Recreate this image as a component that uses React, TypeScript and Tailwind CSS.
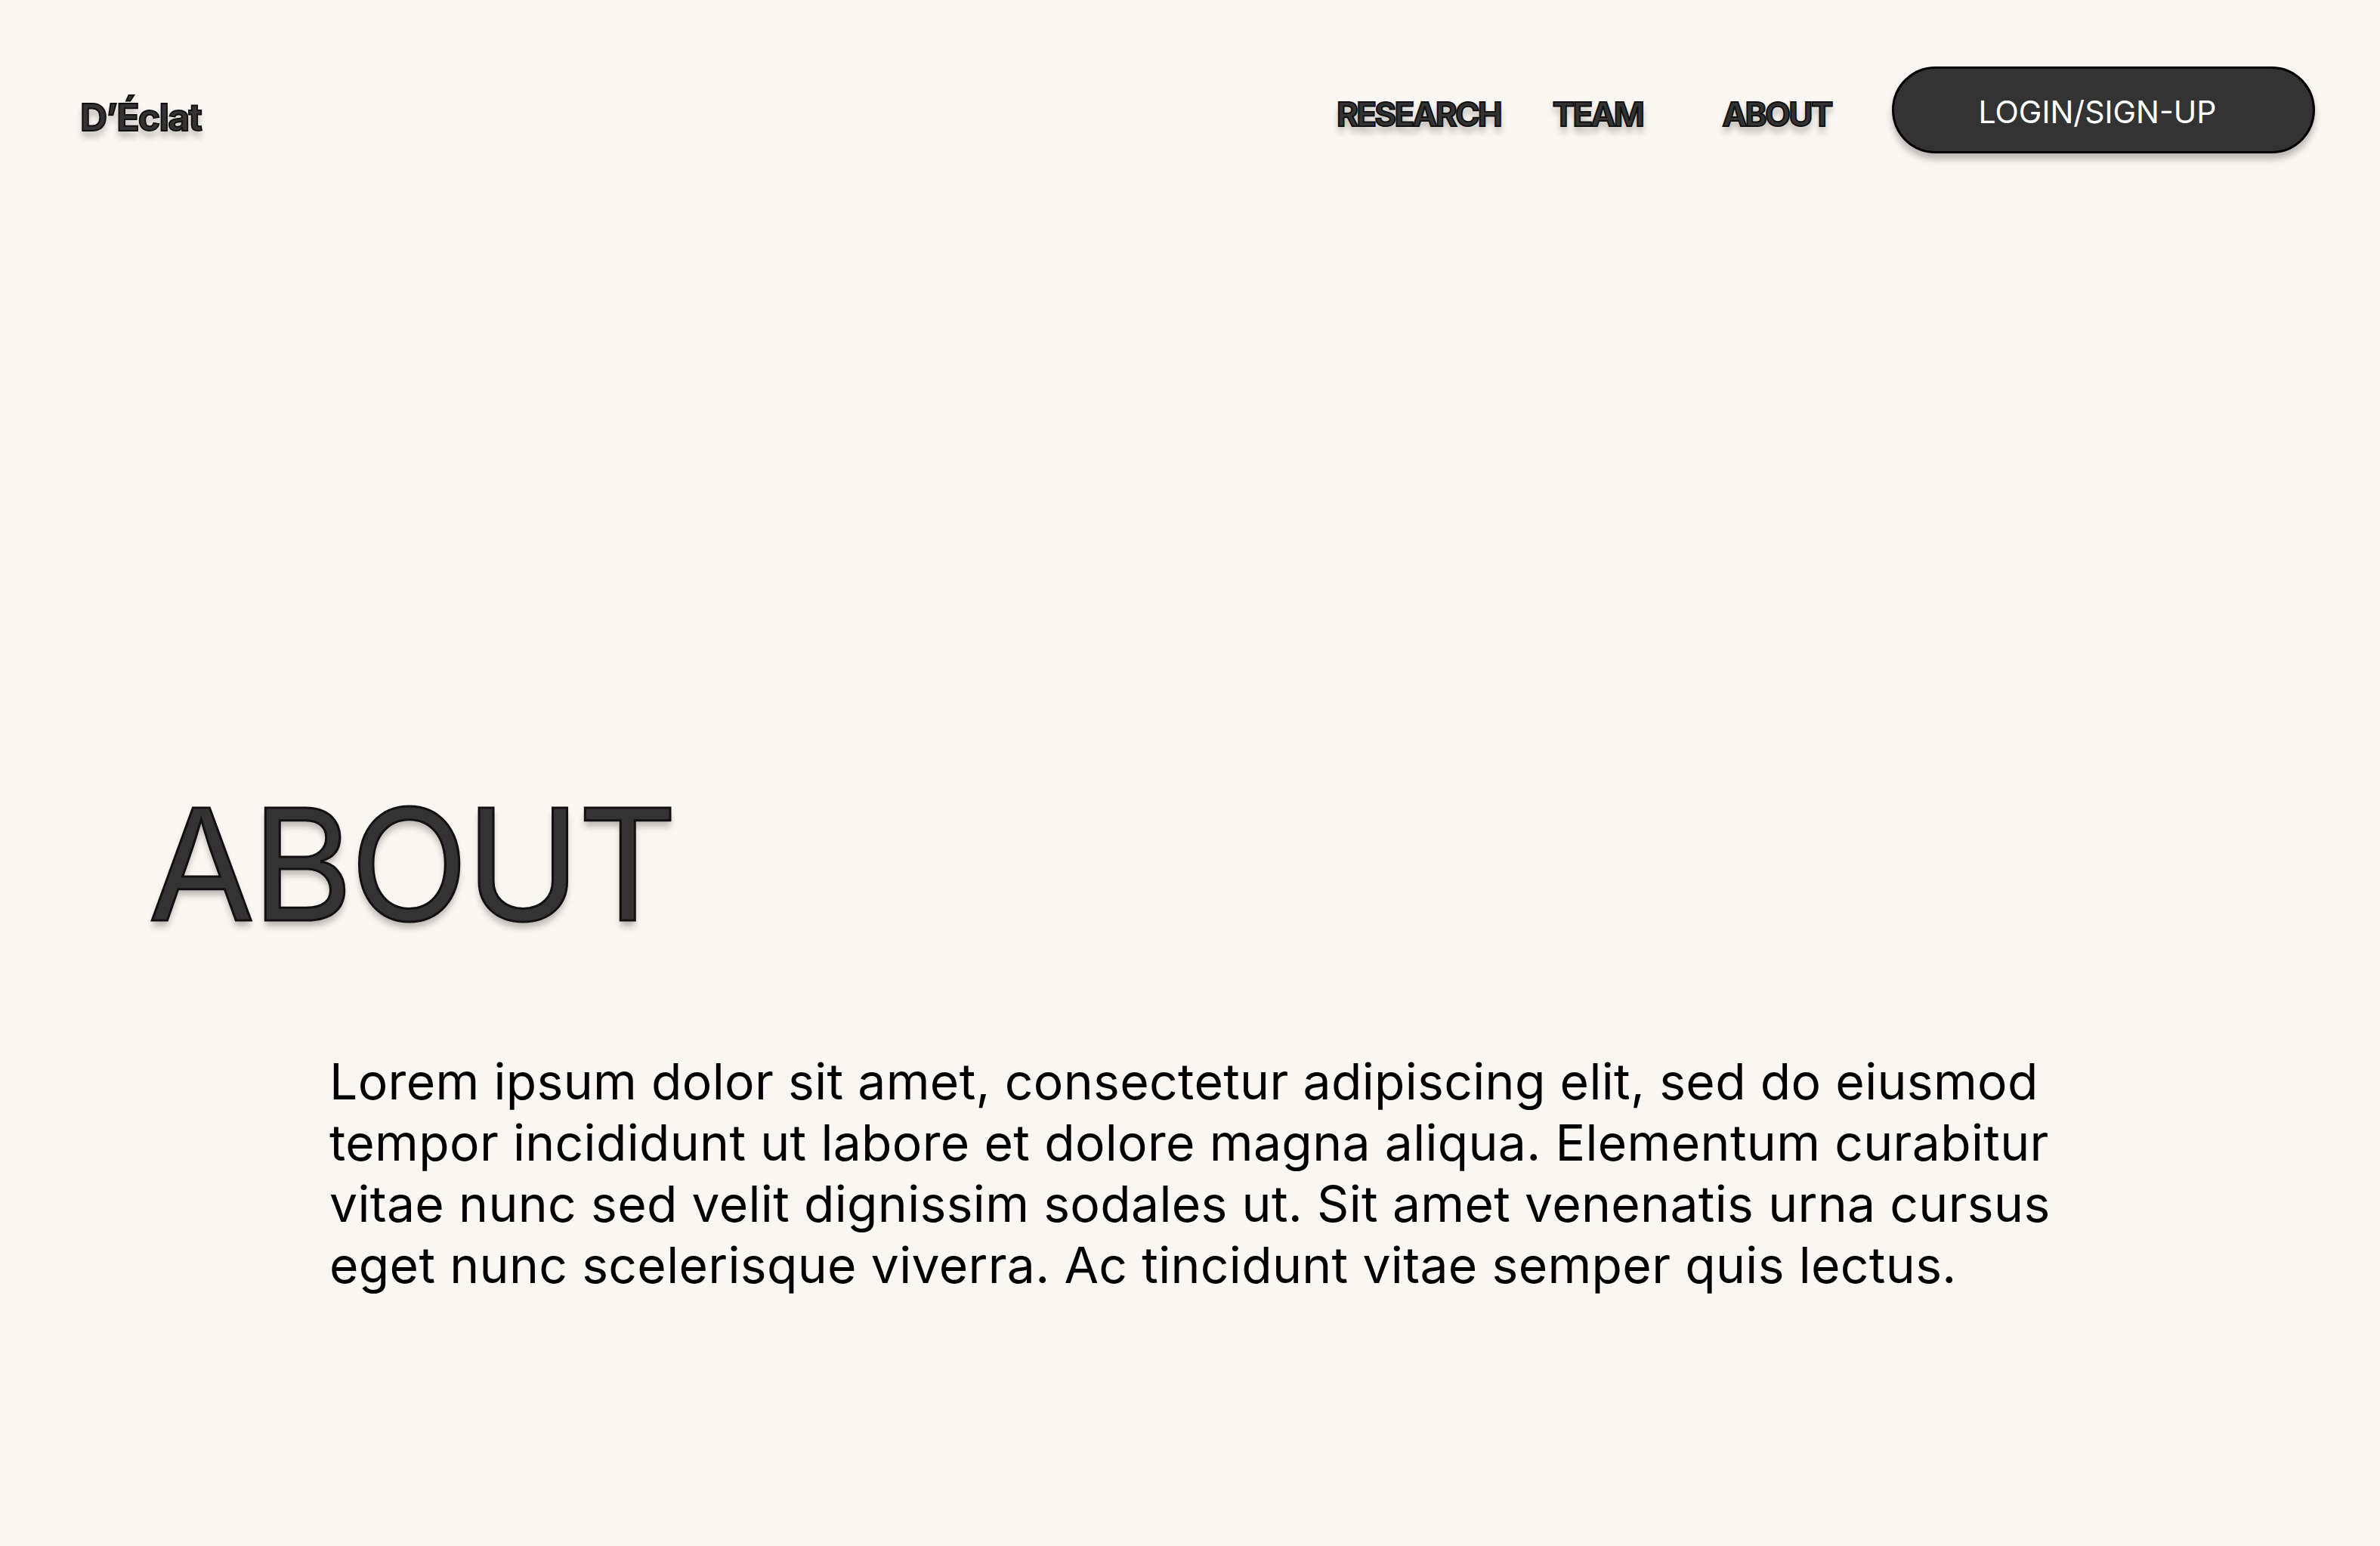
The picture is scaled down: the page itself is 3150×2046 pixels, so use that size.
import React from 'react';

const navItems = ['RESEARCH', 'TEAM', 'ABOUT'];

const App: React.FC = () => {
  return (
    <div className="min-h-screen w-full bg-[#faf6f1] font-['Inter','Noto_Sans',sans-serif] text-[#333333]">
      {/* Header */}
      <header className="flex items-center justify-between pt-[88px] pl-[106px] pr-[86px]">
        <div className="mt-[18px] text-[50px] font-bold leading-none tracking-[-0.035em] [-webkit-text-stroke:2px_#111] [text-shadow:0_8px_8px_rgba(0,0,0,0.25)]">
          D’Éclat
        </div>

        <nav className="flex items-center">
          {navItems.map((item) => (
            <a
              key={item}
              href="#"
              className="mt-[10px] w-[237px] text-center text-[44px] font-bold leading-none tracking-[-0.06em] [-webkit-text-stroke:2px_#111] [text-shadow:0_8px_8px_rgba(0,0,0,0.25)]"
            >
              {item}
            </a>
          ))}
          <button className="ml-[34px] flex h-[115px] w-[560px] items-center justify-center rounded-full border-[3px] border-black bg-[#333333] pt-[6px] pr-[16px] text-[41px] font-normal text-white shadow-[0_8px_8px_rgba(0,0,0,0.25)]">
            LOGIN/SIGN-UP
          </button>
        </nav>
      </header>

      {/* About */}
      <main className="flex flex-col pl-[196px] pt-[838px]">
        <h1 className="text-[205px] font-normal leading-none tracking-[-0.02em] [-webkit-text-stroke:3px_#111] [text-shadow:0_8px_8px_rgba(0,0,0,0.25)]">
          ABOUT
        </h1>
        <p className="ml-[240px] mt-[145px] w-[2320px] text-[66px] leading-[81px] tracking-[0.005em] text-black">
          Lorem ipsum dolor sit amet, consectetur adipiscing elit, sed do eiusmod tempor incididunt ut labore et dolore
          magna aliqua. Elementum curabitur vitae nunc sed velit dignissim sodales ut. Sit amet venenatis urna cursus eget
          nunc scelerisque viverra. Ac tincidunt vitae semper quis lectus.
        </p>
      </main>
    </div>
  );
};

export default App;
